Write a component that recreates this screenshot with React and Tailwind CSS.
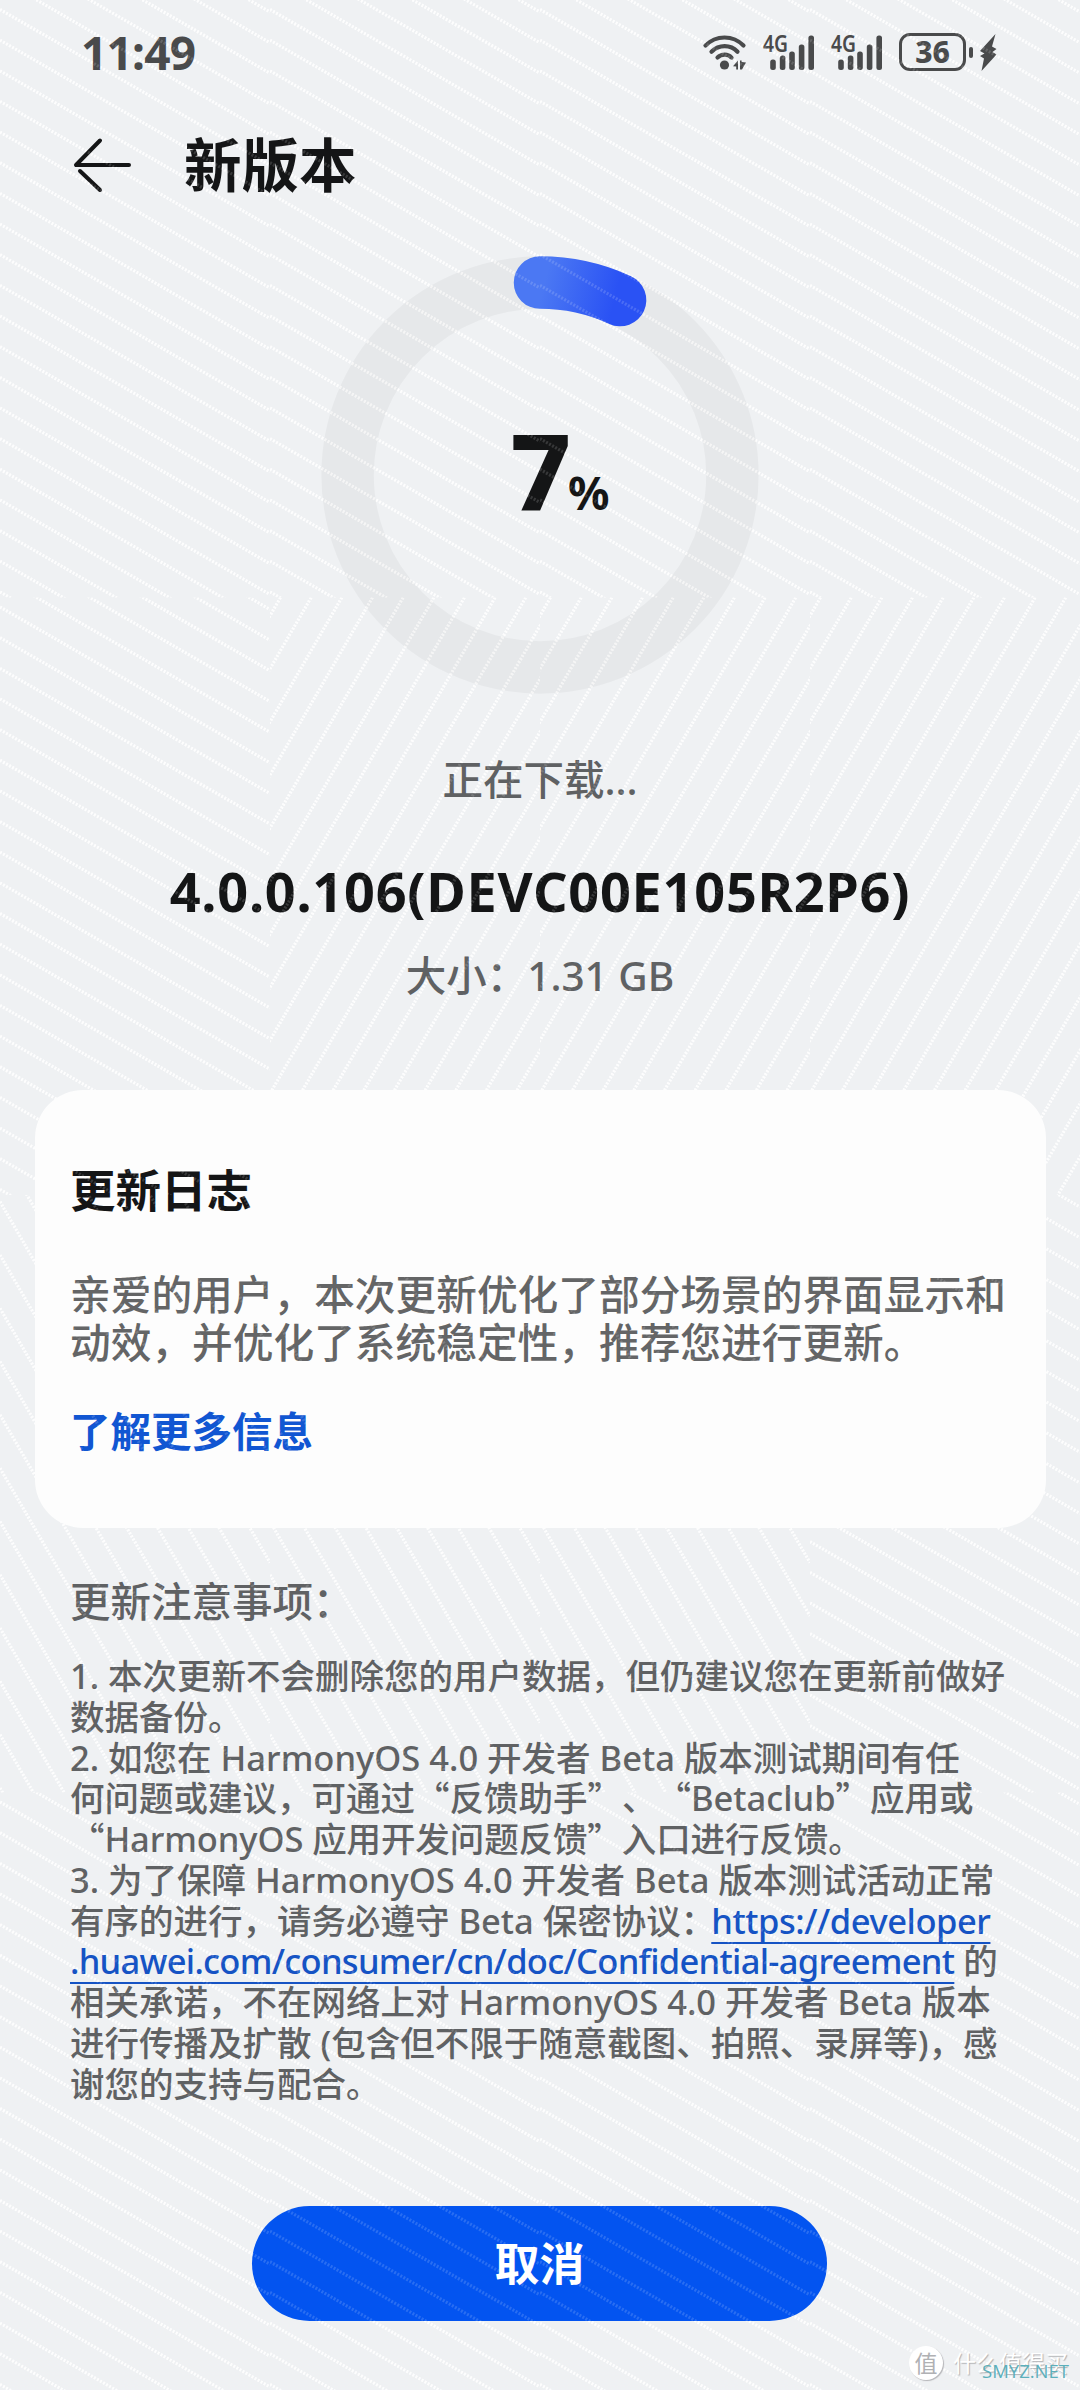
const TILE_W = 270;
const TILE_H = 597.5;

const ROWS = [
  ["shallow", "shallow", "shallow", "shallow"],
  ["shallow", "rising", "rising", "rising"],
  ["falling", "falling", "falling", "shallow"],
  ["shallow", "shallow", "shallow", "shallow"],
];

const getLines = (type) => {
  const lines = [];
  for (let i = -20; i < 40; i++) {
    if (type === "shallow") {
      const y = 9.5 + i * 30.65;
      lines.push([0, y, TILE_W, y + TILE_W * 0.577]);
    } else if (type === "rising") {
      const x = 10.5 + i * 30.65;
      lines.push([x, 0, x - TILE_H / 1.732, TILE_H]);
    } else {
      const y = 421 + i * 53.3;
      lines.push([0, y - TILE_W * 1.732, TILE_W, y]);
    }
  }
  return lines;
};

const LINES = {
  shallow: getLines("shallow"),
  rising: getLines("rising"),
  falling: getLines("falling"),
};

const HatchPattern = ({ className }) => (
  <svg
    viewBox="0 0 1080 2390"
    className={`absolute inset-0 w-[1080px] h-[2390px] pointer-events-none ${className}`}
    aria-hidden="true"
  >
    {ROWS.map((row, r) =>
      row.map((type, c) => (
        <svg
          key={`${r}-${c}`}
          x={c * TILE_W}
          y={r * TILE_H}
          width={TILE_W}
          height={TILE_H}
          overflow="hidden"
        >
          {LINES[type].map(([x1, y1, x2, y2], i) => (
            <line
              key={i}
              x1={x1}
              y1={y1}
              x2={x2}
              y2={y2}
              stroke="#fff"
              strokeWidth="3.2"
              strokeDasharray="2 1.5"
            />
          ))}
        </svg>
      ))
    )}
  </svg>
);

const WifiIcon = () => (
  <svg width="46" height="38" viewBox="0 0 46 38" fill="none">
    <g stroke="#494a4b" strokeWidth="4.2" strokeLinecap="round">
      <path d="M3.5 12.5C14 1.8 31 1.8 41.5 12.5" />
      <path d="M9.5 18.8C17 11.3 28.5 11.3 35.5 18.8" />
      <path d="M15.5 24.6C19.5 20.6 25.8 20.6 29.5 24.6" />
    </g>
    <circle cx="22.5" cy="32" r="4.6" fill="#494a4b" />
    <path d="M36 27.5v9h-1.8v-3L31 33.2zM38 27.5h1.6v1.6l4.4.4-4 7H38z" fill="#494a4b" />
  </svg>
);

const SignalIcon = () => (
  <svg className="overflow-visible" width="52" height="38" viewBox="0 0 52 38">
    <text
      x="0"
      y="19"
      fontSize="23"
      fontWeight="600"
      textLength="25"
      lengthAdjust="spacingAndGlyphs"
      fill="#494a4b"
      fontFamily="Noto Sans, sans-serif"
    >
      4G
    </text>
    <g fill="#494a4b">
      <rect x="7.2" y="26.5" width="5.6" height="10.5" rx="2.5" />
      <rect x="16.8" y="22.5" width="5.6" height="14.5" rx="2.5" />
      <rect x="26.2" y="18.5" width="5.6" height="18.5" rx="2.5" />
      <rect x="35.8" y="11.5" width="5.6" height="25.5" rx="2.5" />
      <rect x="45.4" y="2.5" width="5.6" height="34.5" rx="2.5" />
    </g>
  </svg>
);

const StatusBar = () => (
  <div className="h-[104px] flex items-center text-[#494a4b]">
    <span className="ml-[81px] w-[621px] text-[46px] tracking-[-0.8px] font-bold">11:49</span>
    <div className="flex items-center">
      <WifiIcon />
      <div className="ml-[15px]">
        <SignalIcon />
      </div>
      <div className="ml-[16px]">
        <SignalIcon />
      </div>
      <div className="ml-[16px] w-[67px] h-[38px] border-[3px] border-[#494a4b] rounded-[11px] flex items-center justify-center text-[30px] leading-none font-extrabold">
        36
      </div>
      <div className="ml-[3px] w-[4px] h-[11px] rounded-sm bg-[#494a4b]" />
      <svg className="ml-[6px]" width="19" height="39" viewBox="0 0 19 39">
        <path d="M16.5 1L1 18l4.5 2.5L1 23l4 2.5L2.5 38 17.5 21.5 13.5 19l4-3-4.5-2.5z" fill="#494a4b" />
      </svg>
    </div>
  </div>
);

const Header = () => (
  <div className="h-[122px] flex items-center text-[#141516]">
    <svg className="ml-[73px]" width="58" height="56" viewBox="0 0 58 56" fill="none">
      <g stroke="#141516" strokeWidth="4" strokeLinecap="round" strokeLinejoin="round">
        <path d="M27 3.5L3 28H56" />
        <path d="M7 34L27 53" />
      </g>
    </svg>
    <h1 className="ml-[53px] text-[57.5px] leading-[80px] font-bold">新版本</h1>
  </div>
);

const Progress = ({ value }) => {
  const r = 192.4;
  const angle = (24.6 * Math.PI) / 180;
  const x = 219 + r * Math.sin(angle);
  const y = 219 - r * Math.cos(angle);

  return (
    <div className="relative mt-[30px] mx-auto w-[438px] h-[438px]">
      <svg width="438" height="438" viewBox="0 0 438 438" fill="none">
        <defs>
          <linearGradient id="bar" gradientUnits="userSpaceOnUse" x1="215" y1="60" x2="285" y2="78">
            <stop offset="0" stopColor="#4b78f3" />
            <stop offset="1" stopColor="#2a52f4" />
          </linearGradient>
        </defs>
        <circle cx="219" cy="219" r={r} stroke="#000" strokeOpacity="0.035" strokeWidth="52.5" />
        <path
          d={`M219 ${219 - r}A${r} ${r} 0 0 1 ${x} ${y}`}
          stroke="url(#bar)"
          strokeWidth="52.5"
          strokeLinecap="round"
        />
      </svg>
      <div className="absolute inset-0 flex items-baseline pl-[189px] pt-[150px] text-[#141516]">
        <span className="text-[106px] leading-[126px] w-[58px] font-extrabold">{value}</span>
        <span className="text-[46px] font-bold">%</span>
      </div>
    </div>
  );
};

// full-width quotation marks
const Q = ({ children }) => (
  <span className="leading-[0] font-['Noto_Sans_CJK_SC',sans-serif] [text-spacing-trim:space-all]">
    {children}
  </span>
);

const Line = ({ children, className = "" }) => (
  <span className={`block whitespace-nowrap ${className}`}>{children}</span>
);

const Notes = () => (
  <section className="ml-[70px] text-[#5f6163] font-medium">
    <h3 className="mt-[44px] text-[40.5px] leading-[60px]">更新注意事项：</h3>
    <div className="mt-[24px] text-[34.5px] leading-[40.75px]">
      <Line className="h-[40.75px]">1. 本次更新不会删除您的用户数据，但仍建议您在更新前做好</Line>
      <Line className="h-[40.75px]">数据备份。</Line>
      <Line className="h-[40.75px]">2. 如您在 HarmonyOS 4.0 开发者 Beta 版本测试期间有任</Line>
      <Line className="h-[40.75px]">
        何问题或建议，可通过<Q>“</Q>反馈助手<Q>”、“</Q>Betaclub<Q>”</Q>应用或
      </Line>
      <Line className="h-[40.75px] tracking-[-0.1px]">
        <Q>“</Q>HarmonyOS 应用开发问题反馈<Q>”</Q>入口进行反馈。
      </Line>
      <Line className="h-[40.75px]">3. 为了保障 HarmonyOS 4.0 开发者 Beta 版本测试活动正常</Line>
      <Line className="h-[40.75px]">
        有序的进行，请务必遵守 Beta 保密协议：
        <a className="-ml-[4px] tracking-[-0.45px] text-[#1553c4] underline underline-offset-[8px] decoration-2 [text-decoration-skip-ink:none]">
          https://developer
        </a>
      </Line>
      <Line className="h-[40.75px]">
        <a className="tracking-[-0.7px] text-[#1553c4] underline underline-offset-[8px] decoration-2 [text-decoration-skip-ink:none]">
          .huawei.com/consumer/cn/doc/Confidential-agreement
        </a>{" "}
        的
      </Line>
      <Line className="h-[40.75px]">相关承诺，不在网络上对 HarmonyOS 4.0 开发者 Beta 版本</Line>
      <Line className="h-[40.75px]">进行传播及扩散 (包含但不限于随意截图、拍照、录屏等)，感</Line>
      <Line className="h-[40.75px]">谢您的支持与配合。</Line>
    </div>
  </section>
);

const Watermark = () => (
  <div className="absolute left-[909px] top-[2346px] flex items-center">
    <div className="size-[34px] rounded-full bg-white shadow-[1px_1px_1px_#b5b5b8] flex items-center justify-center text-[23px] leading-none text-[#b0b1b4]">
      值
    </div>
    <span className="ml-[10px] text-[23px] leading-[34px] text-white [text-shadow:1px_1px_1px_#b0b1b4]">
      什么值得买
    </span>
    <span className="absolute left-[73px] top-[12px] text-[18.5px] leading-[26px] text-[#5cafbb] font-['Open_Sans',sans-serif]">
      SMYZ.NET
    </span>
  </div>
);

const App = () => {
  return (
    <div
      lang="zh-CN"
      className="relative w-[1080px] h-[2390px] overflow-hidden bg-[#eff1f3] font-['Noto_Sans','Noto_Sans_CJK_SC',sans-serif]"
    >
      <HatchPattern className="opacity-90" />
      <main className="relative flex flex-col">
        <StatusBar />
        <Header />
        <Progress value={7} />

        <p className="mt-[56px] text-center text-[40.5px] leading-[60px] font-medium text-[#5f6163]">
          正在下载...
        </p>
        <h2 className="mt-[49px] text-center text-[54px] leading-[64px] tracking-[0.75px] font-bold text-[#141516]">
          4.0.0.106(DEVC00E105R2P6)
        </h2>
        <p className="mt-[23px] text-center text-[40.5px] leading-[60px] font-medium text-[#5f6163]">
          大小：1.31 GB
        </p>

        <section className="mt-[84px] mx-[34.5px] h-[438px] pt-[70px] pl-[35.5px] rounded-[48px] bg-[#fdfdfd]">
          <h3 className="text-[45.5px] leading-[60px] font-bold text-[#141516]">更新日志</h3>
          <p className="mt-[50px] text-[40.7px] leading-[48.3px] font-medium text-[#646566]">
            <Line>亲爱的用户，本次更新优化了部分场景的界面显示和</Line>
            <Line>动效，并优化了系统稳定性，推荐您进行更新。</Line>
          </p>
          <a className="block mt-[35px] text-[40.5px] leading-[60px] font-bold text-[#1156d2]">
            了解更多信息
          </a>
        </section>

        <Notes />

        <button className="mt-[102px] ml-[252px] w-[575px] h-[115px] rounded-full bg-[#0354f0] text-white text-[45px] font-bold">
          取消
        </button>
      </main>
      <HatchPattern className="opacity-15" />
      <Watermark />
    </div>
  );
};

export default App;
